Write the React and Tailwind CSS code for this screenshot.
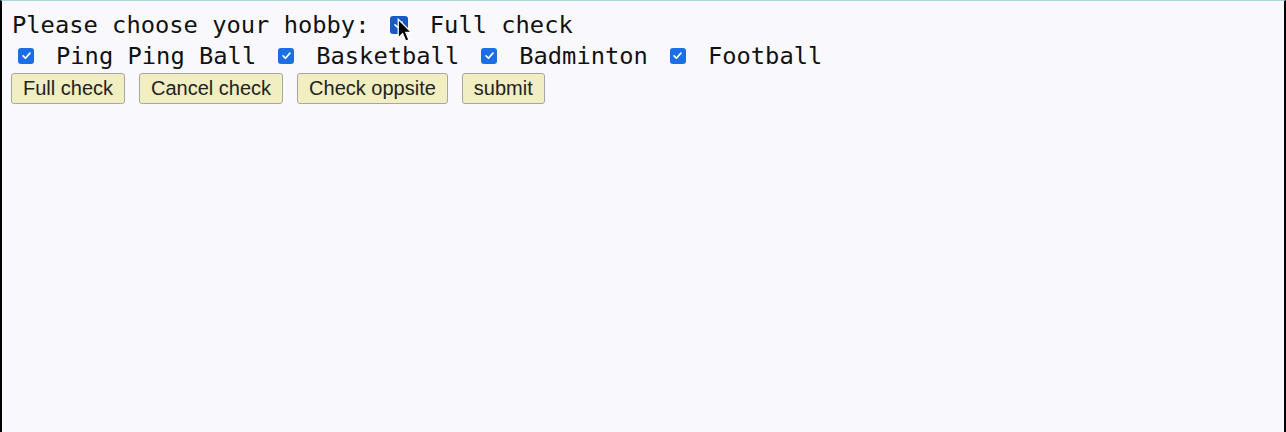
import React from 'react';

const mono = { fontFamily: '"DejaVu Sans Mono", "Liberation Mono", monospace' };

function Box({ size = 'w-4 h-4', dark = false }) {
  return (
    <span className={`inline-flex items-center justify-center rounded-[3px] ${size} ${dark ? 'bg-[#1859c4]' : 'bg-[#1b6fe6]'}`}>
      <svg viewBox="0 0 16 16" className="w-[11px] h-[11px]">
        <path d="M3 8.5 L6.5 12 L13 4.5" fill="none" stroke="white" strokeWidth="2.4" strokeLinecap="round" strokeLinejoin="round" />
      </svg>
    </span>
  );
}

const hobbies = ['Ping Ping Ball', 'Basketball', 'Badminton', 'Football'];
const buttons = ['Full check', 'Cancel check', 'Check oppsite', 'submit'];

export default function App() {
  return (
    <div className="h-[432px] w-full bg-[#f9f9fd] border-t border-[#a9d6da] border-l-2 border-r-2 border-l-black border-r-black text-[#111]">
      {/* first row */}
      <div className="flex items-center pl-[10px] pt-[11px] h-[36px] text-[23.75px] leading-[30px]" style={mono}>
        <span className="whitespace-pre">Please choose your hobby: </span>
        <span className="relative ml-[6px] mr-[22px] inline-flex">
          <Box size="w-[18px] h-[18px]" dark />
          <svg viewBox="0 0 12 20" className="absolute left-[7px] top-[2px] w-[15px] h-[25px]">
            <path d="M1 1 L1 16 L4.5 12.5 L7 18.5 L9.5 17.5 L7 11.5 L11.5 11.5 Z" fill="black" stroke="white" strokeWidth="1" />
          </svg>
        </span>
        <span>Full check</span>
      </div>
      {/* second row */}
      <div className="flex items-center gap-[22px] pl-[16px] mt-[3px] h-[31px] text-[23.75px] leading-[30px]" style={mono}>
        {hobbies.map((h) => (
          <React.Fragment key={h}>
            <Box />
            <span>{h}</span>
          </React.Fragment>
        ))}
      </div>
      {/* buttons */}
      <div className="flex gap-[14px] pl-[9px] pt-[2px]">
        {buttons.map((b) => (
          <button
            key={b}
            className="h-[31px] px-[11px] bg-[#f1efc1] border border-[#a6a6a6] rounded-[3px] text-[20px] leading-[23px] text-[#222]"
            style={{ fontFamily: '"Liberation Sans", Arial, sans-serif' }}
          >
            {b}
          </button>
        ))}
      </div>
    </div>
  );
}
